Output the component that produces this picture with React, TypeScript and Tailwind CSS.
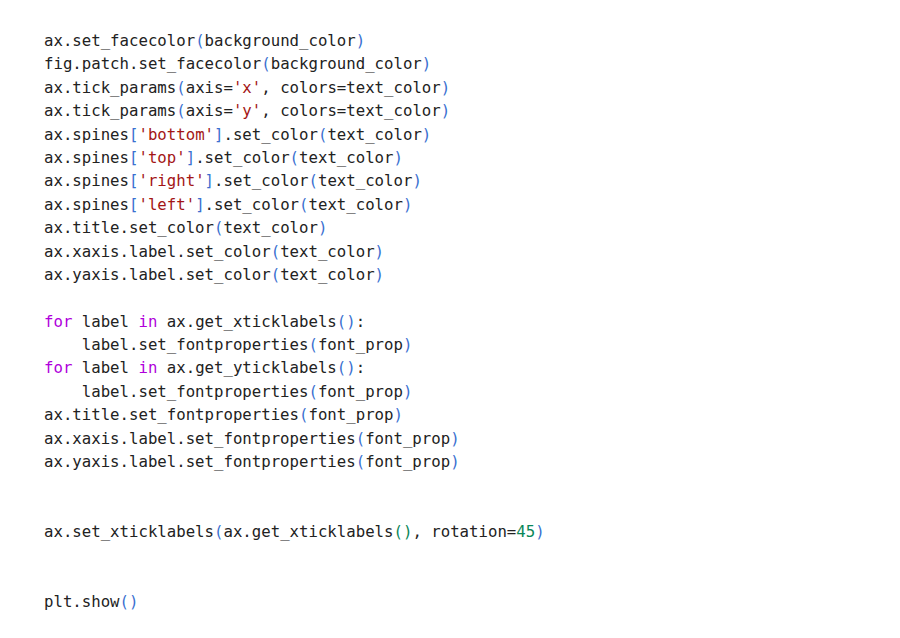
import React from "react";

type Tok = [string, string];

const P = "text-[#3a6fd0]"; // parens, brackets
const S = "text-[#a31515]"; // strings
const K = "text-[#af00db]"; // keywords
const N = "text-[#098658]"; // numbers
const T = ""; // plain

const lines: Tok[][] = [
  [["ax.set_facecolor", T], ["(", P], ["background_color", T], [")", P]],
  [["fig.patch.set_facecolor", T], ["(", P], ["background_color", T], [")", P]],
  [["ax.tick_params", T], ["(", P], ["axis=", T], ["'x'", S], [", colors=text_color", T], [")", P]],
  [["ax.tick_params", T], ["(", P], ["axis=", T], ["'y'", S], [", colors=text_color", T], [")", P]],
  [["ax.spines", T], ["[", P], ["'bottom'", S], ["]", P], [".set_color", T], ["(", P], ["text_color", T], [")", P]],
  [["ax.spines", T], ["[", P], ["'top'", S], ["]", P], [".set_color", T], ["(", P], ["text_color", T], [")", P]],
  [["ax.spines", T], ["[", P], ["'right'", S], ["]", P], [".set_color", T], ["(", P], ["text_color", T], [")", P]],
  [["ax.spines", T], ["[", P], ["'left'", S], ["]", P], [".set_color", T], ["(", P], ["text_color", T], [")", P]],
  [["ax.title.set_color", T], ["(", P], ["text_color", T], [")", P]],
  [["ax.xaxis.label.set_color", T], ["(", P], ["text_color", T], [")", P]],
  [["ax.yaxis.label.set_color", T], ["(", P], ["text_color", T], [")", P]],
  [],
  [["for", K], [" label ", T], ["in", K], [" ax.get_xticklabels", T], ["()", P], [":", T]],
  [["    label.set_fontproperties", T], ["(", P], ["font_prop", T], [")", P]],
  [["for", K], [" label ", T], ["in", K], [" ax.get_yticklabels", T], ["()", P], [":", T]],
  [["    label.set_fontproperties", T], ["(", P], ["font_prop", T], [")", P]],
  [["ax.title.set_fontproperties", T], ["(", P], ["font_prop", T], [")", P]],
  [["ax.xaxis.label.set_fontproperties", T], ["(", P], ["font_prop", T], [")", P]],
  [["ax.yaxis.label.set_fontproperties", T], ["(", P], ["font_prop", T], [")", P]],
  [],
  [],
  [["ax.set_xticklabels", T], ["(", P], ["ax.get_xticklabels", T], ["()", N], [", rotation=", T], ["45", N], [")", P]],
  [],
  [],
  [["plt.show", T], ["()", P]],
];

export default function App() {
  return (
    <div className="w-[900px] h-[638px] bg-white overflow-hidden pt-[29px] pl-[44px]">
      <pre className="font-['DejaVu_Sans_Mono',monospace] text-[15.7px] leading-[23.4px] text-[#222222] m-0">
        {lines.map((line, i) => (
          <div key={i} className="h-[23.4px] whitespace-pre">
            {line.map(([txt, cls], j) => (
              <span key={j} className={cls}>{txt}</span>
            ))}
          </div>
        ))}
      </pre>
    </div>
  );
}
